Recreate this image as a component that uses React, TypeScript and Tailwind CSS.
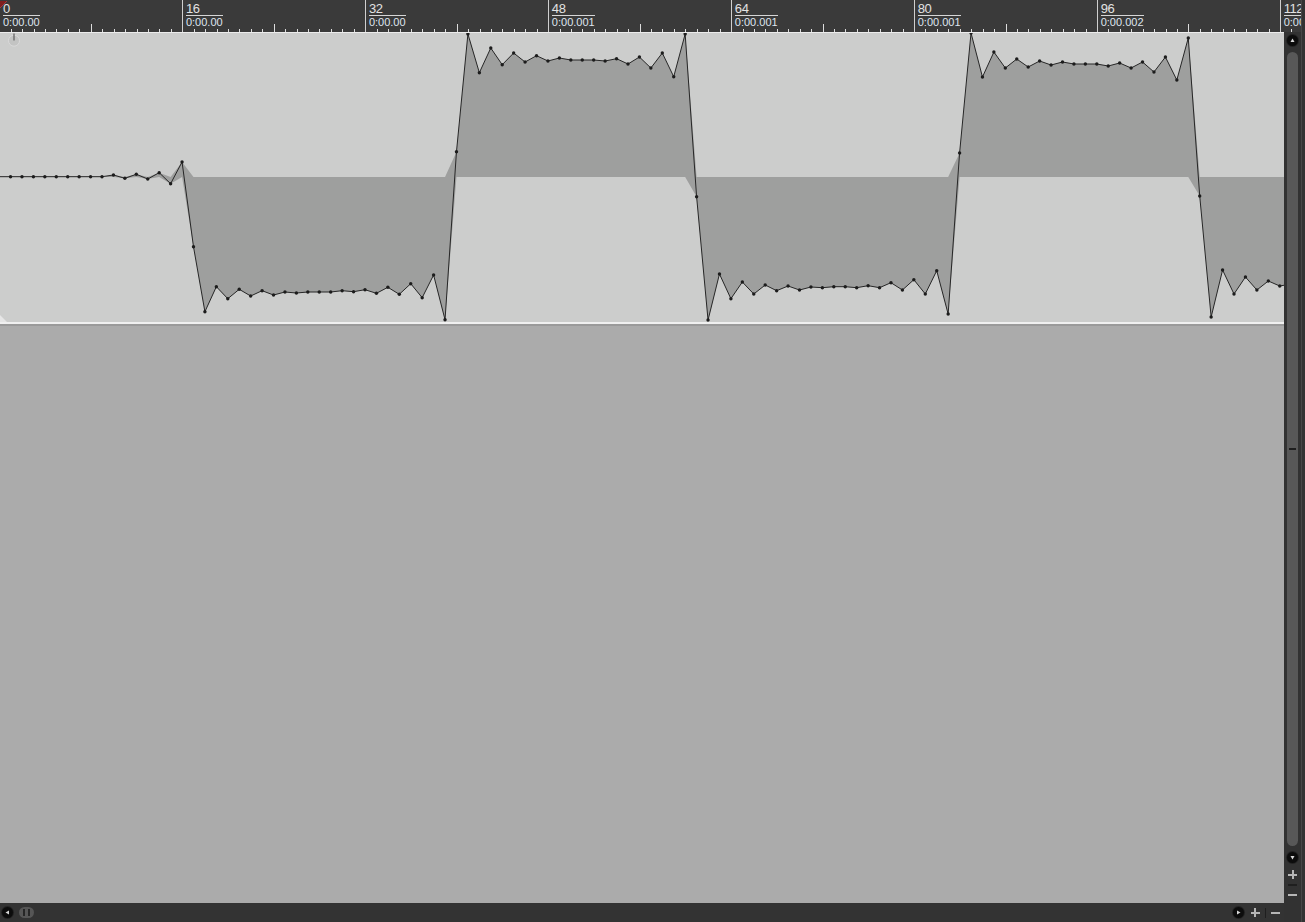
import React from 'react';

// px per sample on the timeline
const SPP = 182.95 / 16;
const sx = (n: number) => n * SPP - 0.9;
const CENTER = 177;

// sample values, in page y (read off the waveform)
const SAMPLES = [
  176.7, 176.7, 176.7, 176.7, 176.7, 176.7, 176.7, 176.7, 176.7, 176.7,
  175, 178.3, 174.3, 179, 172.7, 183.7, 162, 246.7, 311.7, 286.7,
  298.7, 289.3, 296, 290.7, 295, 292, 293, 292, 292, 292,
  290.7, 291.7, 289.7, 293.3, 287.3, 294.3, 283.7, 297.7, 275, 319.7,
  151.7, 34, 72.7, 48, 64.7, 53, 62, 55.7, 61, 58,
  60, 60, 60, 61, 58.7, 64, 57, 68, 53, 76.7,
  34, 196.7, 320, 274, 298.7, 282, 294, 285, 290.7, 286,
  290, 287, 287.7, 286.7, 286.7, 287.7, 285.7, 287.7, 282.7, 290,
  279.7, 294, 270.7, 314, 153, 33, 77, 52, 68, 59,
  67, 61, 65, 62, 64, 64, 64, 66, 63, 68,
  62, 72, 57, 80, 38, 196, 317, 270, 294, 277,
  290, 281, 286, 284,
];

const LABELS = [
  { n: '0', t: '0:00.00' },
  { n: '16', t: '0:00.00' },
  { n: '32', t: '0:00.00' },
  { n: '48', t: '0:00.001' },
  { n: '64', t: '0:00.001' },
  { n: '80', t: '0:00.001' },
  { n: '96', t: '0:00.002' },
  { n: '112', t: '0:00.002' },
];

function Ruler() {
  const ticks = [];
  for (let i = 0; i <= 114; i++) {
    const x = Math.round(sx(i) + 0.2) + 0.5;
    if (i % 16 === 0) {
      ticks.push(<line key={i} x1={x} x2={x} y1={0} y2={32} stroke="#cfcfcf" />);
    } else if (i % 8 === 0) {
      ticks.push(<line key={i} x1={x} x2={x} y1={24} y2={32} stroke="#dcdcdc" />);
    } else {
      ticks.push(<line key={i} x1={x} x2={x} y1={29} y2={32} stroke="#dcdcdc" />);
    }
  }
  return (
    <div className="relative h-[32px] w-full shrink-0 overflow-hidden bg-[#3a3a3a]" style={{ fontFamily: '"Liberation Sans", Arial, sans-serif' }}>
      <svg className="absolute left-0 top-0" width={1301} height={32} shapeRendering="crispEdges">
        {ticks}
      </svg>
      {LABELS.map((l, k) => (
        <div key={k} className="absolute top-0 flex flex-col items-start pt-[2px]" style={{ left: k * 182.95 + 3 }}>
          <div className="flex flex-col">
            <span className="block text-[13px] leading-[13px] tracking-[-0.4px] text-[#e2e2e2]">{l.n}</span>
            <span className="block whitespace-nowrap border-t border-[#d6d6d6] text-[11px] leading-[12px] text-[#dfe5ef]">{l.t}</span>
          </div>
        </div>
      ))}
      <svg className="absolute left-0 top-0" width={10} height={10}>
        <polygon points="0,1 7,1 0,8" fill="#7e1e1e" />
        <line x1={7} y1={1} x2={0} y2={8} stroke="#b04040" strokeWidth={0.8} />
      </svg>
    </div>
  );
}

function Waveform() {
  const pts = SAMPLES.map((y, i) => [sx(i), y] as const);
  const last = pts[pts.length - 1][0];
  const pos =
    `M${pts[0][0]},${CENTER} ` +
    pts.map(([x, y]) => `L${x},${Math.min(y, CENTER)}`).join(' ') +
    ` L${last},${CENTER} Z`;
  const neg =
    `M${pts[0][0]},${CENTER} ` +
    pts.map(([x, y]) => `L${x},${Math.max(y, CENTER)}`).join(' ') +
    ` L${last},${CENTER} Z`;

  return (
    <div className="h-[289px] w-full shrink-0 bg-[#cccdcc]">
      <svg width={1284} height={289} viewBox="0 33 1284 289" className="block">
        <path d={pos} fill="#9e9f9e" />
        <path d={neg} fill="#9e9f9e" />
        <polyline
          points={pts.map(([x, y]) => `${x},${y}`).join(' ')}
          fill="none"
          stroke="#262626"
          strokeWidth={1}
        />
        {pts.slice(1).map(([x, y], i) => (
          <circle key={i} cx={x} cy={y} r={1.7} fill="#1c1c1c" />
        ))}
        <polygon points="0,315 0,322 7,322" fill="#e6e6e6" />
        <circle cx={14} cy={40.7} r={5.5} fill="#c3c4c3" stroke="#dadada" strokeWidth={1} />
        <line x1={14} y1={33.5} x2={14} y2={40.5} stroke="#5c5c5c" strokeWidth={1.2} />
      </svg>
    </div>
  );
}

function RoundBtn({ dir }: { dir: 'up' | 'down' | 'left' | 'right' }) {
  const tri = {
    up: '0.5,4 4.5,4 2.5,0.5',
    down: '0.5,1 4.5,1 2.5,4.5',
    left: '4,0.5 4,4.5 0.5,2.5',
    right: '1,0.5 1,4.5 4.5,2.5',
  }[dir];
  return (
    <div className="flex h-[11px] w-[11px] shrink-0 items-center justify-center rounded-full bg-[#0c0c0c] ring-1 ring-[#222222]">
      <svg width={5} height={5}>
        <polygon points={tri} fill="#d8d8d8" />
      </svg>
    </div>
  );
}

function Plus() {
  return (
    <div className="relative h-[9px] w-[9px] shrink-0">
      <div className="absolute left-0 top-[3.5px] h-[2px] w-[9px] bg-[#b6b6b6]" />
      <div className="absolute left-[3.5px] top-0 h-[9px] w-[2px] bg-[#b6b6b6]" />
    </div>
  );
}

function Minus() {
  return <div className="h-[2px] w-[9px] shrink-0 bg-[#b6b6b6]" />;
}

function VScroll() {
  return (
    <div className="flex w-[17px] shrink-0 flex-col items-center bg-[#323232]">
      <div className="mt-[3px]">
        <RoundBtn dir="up" />
      </div>
      <div className="mt-[6px] flex h-[794px] w-[11px] items-center justify-center rounded-full bg-[#585858]">
        <div className="h-[2px] w-[7px] bg-[#1e1e1e]" />
      </div>
      <div className="mt-[6px]">
        <RoundBtn dir="down" />
      </div>
      <div className="mt-[7px]">
        <Plus />
      </div>
      <div className="mt-[5px] h-[2px] w-[9px] bg-[#1f1f1f]" />
      <div className="mt-[8px]">
        <Minus />
      </div>
    </div>
  );
}

function BottomBar() {
  return (
    <div className="flex h-[19px] shrink-0 items-center bg-[#333333] pl-[2px] pr-[4px]">
      <RoundBtn dir="left" />
      <div className="ml-[6px] flex h-[11px] w-[15px] items-center justify-between rounded-full bg-[#565656] px-[4px]">
        <div className="h-[7px] w-[2px] bg-[#262626]" />
        <div className="h-[7px] w-[2px] bg-[#262626]" />
      </div>
      <div className="flex-1" />
      <RoundBtn dir="right" />
      <div className="ml-[7px]">
        <Plus />
      </div>
      <div className="ml-[5px] h-[10px] w-[1.5px] bg-[#1f1f1f]" />
      <div className="ml-[5px]">
        <Minus />
      </div>
    </div>
  );
}

export default function App() {
  return (
    <div className="flex h-[922px] w-[1305px] overflow-hidden bg-[#333333]">
      <div className="flex w-[1301px] shrink-0 flex-col">
        <Ruler />
        <div className="flex min-h-0 flex-1">
          <div className="flex w-[1284px] shrink-0 flex-col">
            <div className="h-[1px] shrink-0 bg-[#ececec]" />
            <Waveform />
            <div className="h-[2px] shrink-0 bg-[#f0f0f0]" />
            <div className="h-[2px] shrink-0 bg-[#9a9a9a]" />
            <div className="flex-1 bg-[#ababab]" />
            <BottomBar />
          </div>
          <VScroll />
        </div>
      </div>
      <div className="w-[1px] shrink-0 bg-[#474747]" />
      <div className="w-[3px] shrink-0 bg-[#333333]" />
    </div>
  );
}
